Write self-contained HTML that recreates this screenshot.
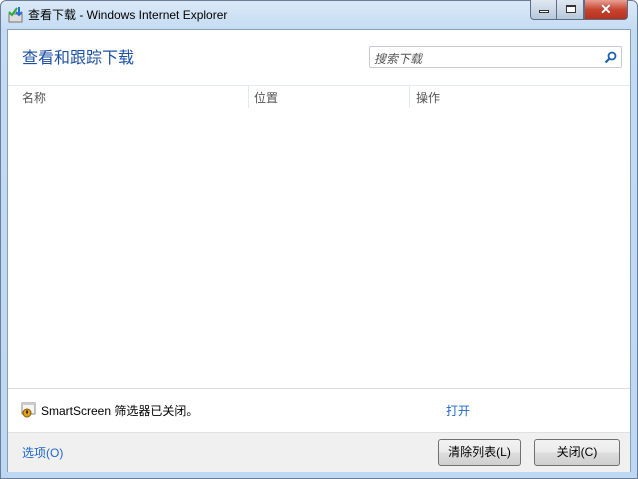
<!DOCTYPE html>
<html><head><meta charset="utf-8"><style>
*{margin:0;padding:0;box-sizing:border-box}
body{width:638px;height:479px;overflow:hidden;font-family:"Liberation Sans","Noto Sans CJK SC",sans-serif;font-size:12px;position:relative;background:#fff}
.frame{position:absolute;left:0;top:0;width:638px;height:479px;border:1px solid #6a7f96;border-radius:6px 6px 0 0;background:linear-gradient(to bottom,#dbe9f7 0,#c3dbf3 30px,#bed7f2 100%)}
.client{position:absolute;left:7px;top:29px;width:624px;height:443px;background:#fff;border:1px solid #8aa0b8}
.title{position:absolute;left:28px;top:6px;font-size:12px;color:#000}
.btn{position:absolute;top:0;height:20px;border:1px solid #5a6f87;border-top:none}
.t{position:absolute}
.bar{position:absolute;left:0;top:402px;width:622px;height:40px;background:#f0f0f0;border-top:1px solid #e0e0e0}
.pb{position:absolute;top:6px;height:27px;border:1px solid #707070;border-radius:3px;background:linear-gradient(#f2f2f2,#ebebeb 50%,#dddddd 51%,#cfcfcf);font-size:12px;text-align:center;line-height:25px;color:#000}
</style></head><body>
<div class="frame"></div>
<svg style="position:absolute;left:7px;top:6px" width="18" height="18"><rect x="2" y="8" width="13" height="8" fill="#ddd" stroke="#777"/><path d="M2 6l3 3 5-7" stroke="#3a3" stroke-width="2" fill="none"/><path d="M12 1v8m-3-3l3 3 3-3" stroke="#2a6fd0" stroke-width="2" fill="none"/></svg>
<div class="title">查看下载 - Windows Internet Explorer</div>
<div class="btn" style="left:530px;width:27px;border-radius:0 0 0 4px;background:linear-gradient(#dfe8f2,#b8c8da)"><div style="position:absolute;left:8px;top:10px;width:10px;height:3px;border:1px solid #333;background:#fff"></div></div>
<div class="btn" style="left:556px;width:28px;background:linear-gradient(#dfe8f2,#b8c8da)"><div style="position:absolute;left:9px;top:5px;width:10px;height:8px;border:1px solid #333;border-top-width:2px;background:#fff"></div></div>
<div class="btn" style="left:584px;width:44px;border-radius:0 0 4px 0;background:linear-gradient(#e8a093,#c7452f 50%,#b83020)"><div style="position:absolute;left:15px;top:1px;color:#fff;font-weight:bold;font-size:14px;text-shadow:0 0 1px #333">✕</div></div>
<div class="client">
<div class="t" style="left:14px;top:14px;font-size:16px;color:#1e50a2">查看和跟踪下载</div>
<div style="position:absolute;left:361px;top:16px;width:253px;height:22px;border:1px solid #c8ccd2;border-radius:2px"><span class="t" style="left:4px;top:3px;color:#555;font-style:italic">搜索下载</span>
<svg style="position:absolute;right:4px;top:4px" width="13" height="13"><circle cx="8" cy="5" r="3.5" stroke="#1e5fb0" stroke-width="1.8" fill="none"/><path d="M5.5 7.5L1.5 11.5" stroke="#1e5fb0" stroke-width="2.2"/></svg></div>
<div style="position:absolute;left:0;top:55px;width:622px;border-top:1px solid #e4e9f0"></div>
<div style="position:absolute;left:240px;top:56px;height:22px;border-left:1px solid #e4e9f0"></div>
<div style="position:absolute;left:401px;top:56px;height:22px;border-left:1px solid #e4e9f0"></div>
<div class="t" style="left:14px;top:59px;color:#555">名称</div>
<div class="t" style="left:246px;top:59px;color:#555">位置</div>
<div class="t" style="left:408px;top:59px;color:#555">操作</div>
<div style="position:absolute;left:0;top:358px;width:622px;border-top:1px solid #dcdcdc"></div>
<svg style="position:absolute;left:13px;top:372px" width="16" height="16"><rect x="1" y="1" width="13" height="11" fill="#f4f4f4" stroke="#888"/><rect x="1" y="1" width="13" height="2" fill="#ccc"/><circle cx="6" cy="11" r="4" fill="#e0a020" stroke="#8a5a00"/><rect x="5.3" y="8.5" width="1.4" height="3" fill="#000"/></svg>
<div class="t" style="left:33px;top:372px;color:#000">SmartScreen 筛选器已关闭。</div>
<div class="t" style="left:438px;top:372px;color:#1e66c8">打开</div>
<div class="bar">
<div class="t" style="left:14px;top:11px;color:#1e66c8">选项(O)</div>
<div class="pb" style="left:430px;width:83px">清除列表(L)</div>
<div class="pb" style="left:526px;width:86px">关闭(C)</div>
</div>
</div>
</body></html>
